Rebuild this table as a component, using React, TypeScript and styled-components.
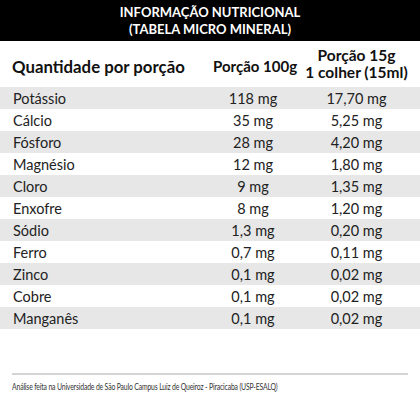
import React from "react";
import styled, { createGlobalStyle } from "styled-components";

const Global = createGlobalStyle`
  html, body { margin: 0; padding: 0; background: #fff; }
  body { font-family: Lato, "Open Sans", sans-serif; color: #1e1e1e; }
`;

const Page = styled.div`
  width: 420px;
  height: 420px;
  display: flex;
  flex-direction: column;
  background: #fff;
`;

const TitleBar = styled.div`
  background: #000;
  color: #fff;
  height: 41px;
  display: flex;
  flex-direction: column;
  align-items: center;
  justify-content: center;
  font-weight: 700;
  font-size: 13px;
  line-height: 17px;
  text-align: center;
`;

const Grid = styled.div`
  display: grid;
  grid-template-columns: 213px 80px 1fr;
`;

const HeadRow = styled(Grid)`
  height: 46px;
  align-items: center;
  font-weight: 700;
  color: #111;
`;

const HeadName = styled.div`
  padding-left: 12px;
  font-size: 16.8px;
  padding-top: 4px;
`;

const HeadCol = styled.div<{ $small?: boolean }>`
  text-align: center;
  white-space: nowrap;
  font-size: ${(p) => (p.$small ? "15.5px" : "15px")};
  line-height: 17px;
  padding-top: ${(p) => (p.$small ? "0" : "4px")};
`;

const Row = styled(Grid)<{ $shade: boolean }>`
  height: 22px;
  align-items: center;
  background: ${(p) => (p.$shade ? "#e7e7e7" : "#fff")};
  font-size: 14.5px;
  color: #222;
`;

const Name = styled.div`
  padding-left: 13px;
`;

const Val = styled.div`
  text-align: center;
  white-space: nowrap;
`;

const Footer = styled.div`
  margin-top: 44px;
  padding: 0 12px;
`;

const Rule = styled.div`
  height: 2px;
  background: #d4d4d4;
`;

const Note = styled.div`
  margin-top: 6px;
  font-size: 9px;
  letter-spacing: -0.2px;
  color: #333;
  white-space: nowrap;
  transform: scaleX(0.76);
  transform-origin: left center;
`;

const rows: [string, string, string][] = [
  ["Potássio", "118 mg", "17,70 mg"],
  ["Cálcio", "35 mg", "5,25 mg"],
  ["Fósforo", "28 mg", "4,20 mg"],
  ["Magnésio", "12 mg", "1,80 mg"],
  ["Cloro", "9 mg", "1,35 mg"],
  ["Enxofre", "8 mg", "1,20 mg"],
  ["Sódio", "1,3 mg", "0,20 mg"],
  ["Ferro", "0,7 mg", "0,11 mg"],
  ["Zinco", "0,1 mg", "0,02 mg"],
  ["Cobre", "0,1 mg", "0,02 mg"],
  ["Manganês", "0,1 mg", "0,02 mg"],
];

export default function App() {
  return (
    <Page>
      <Global />
      <TitleBar>
        <div>INFORMAÇÃO NUTRICIONAL</div>
        <div>(TABELA MICRO MINERAL)</div>
      </TitleBar>
      <HeadRow>
        <HeadName>Quantidade por porção</HeadName>
        <HeadCol>Porção 100g</HeadCol>
        <HeadCol $small>
          Porção 15g
          <br />1 colher (15ml)
        </HeadCol>
      </HeadRow>
      {rows.map(([n, a, b], i) => (
        <Row key={n} $shade={i % 2 === 0}>
          <Name>{n}</Name>
          <Val>{a}</Val>
          <Val>{b}</Val>
        </Row>
      ))}
      <Footer>
        <Rule />
        <Note>
          Análise feita na Universidade de São Paulo Campus Luiz de Queiroz - Piracicaba (USP-ESALQ)
        </Note>
      </Footer>
    </Page>
  );
}
